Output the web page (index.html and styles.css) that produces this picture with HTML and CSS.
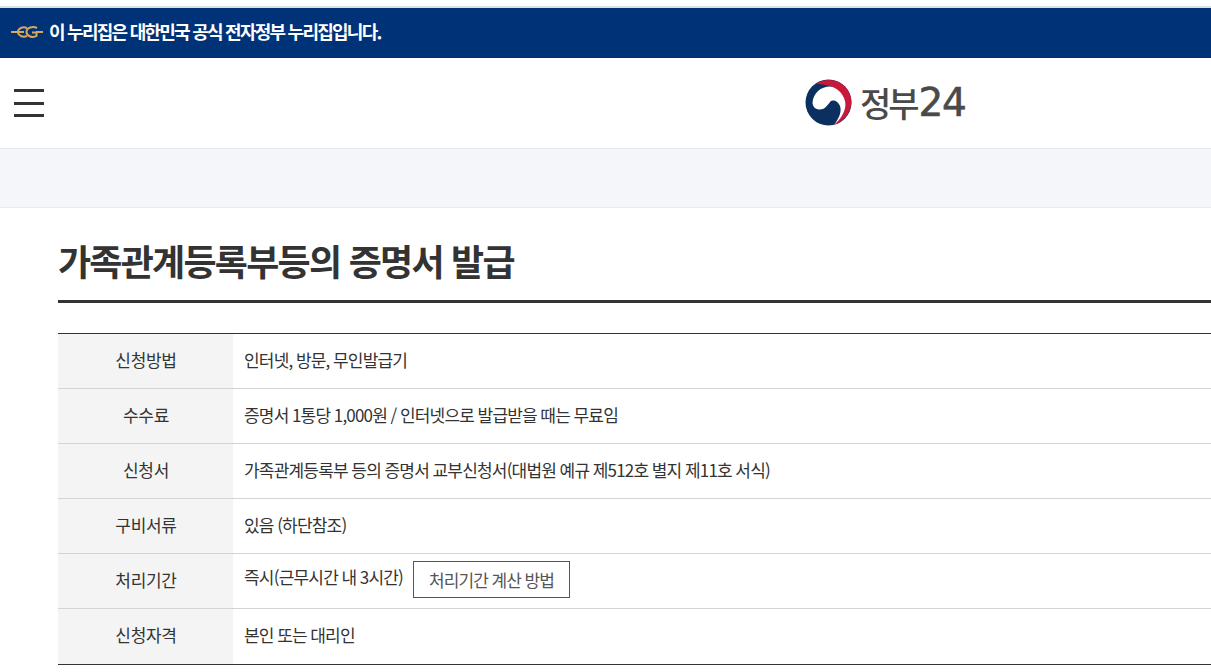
FILE: index.html
```html
<!DOCTYPE html>
<html lang="ko">
<head>
<meta charset="utf-8">
<title>가족관계등록부등의 증명서 발급</title>
<link rel="stylesheet" href="styles.css">
</head>
<body>
<div class="topline"></div>
<div class="gov-banner">
  <svg class="eg" width="32" height="12" viewBox="0 0 32 12" fill="none" stroke="#d6a85c" stroke-width="2">
    <path d="M0 6H13"/>
    <path d="M16 2C12 .5 8 1.500 6.500 6C8 10.500 12 11.500 16 10"/>
    <path d="M26 2C22 0 15.500 1.500 15.500 6C15.500 10.500 22 12 25.500 10V6.500H21"/>
    <path d="M25 6H32"/>
  </svg>
  <span class="gov-text">이 누리집은 대한민국 공식 전자정부 누리집입니다.</span>
</div>
<header class="site-header">
  <button class="menu" aria-label="메뉴"><span></span><span></span><span></span></button>
  <div class="logo">
    <svg width="47" height="47" viewBox="0 0 47 47">
      <circle cx="23.500" cy="23.500" r="23" fill="#0b2f5e"/>
      <path d="M7.500 24C8 14 16 7.500 25 7.500C35 7.500 42 15 42 24C42 33 37 41 29 46C34 39 37 33 35 27C33 22 28 20 25 23C22 27 19 31 14 30.500C10 30 8 27.500 7.500 24Z" fill="#fff"/>
      <path d="M11 4.500C19 -.5 31 -.5 39 6.500C48 15 49 28 41 37.500C38 41 34 44.500 29 46C36 40 42 31 40 22C38 13 29 6.500 20 6C17 5.500 14 5 11 4.500Z" fill="#c8183c"/>
    </svg>
    <span class="logo-text">정부<span class="logo-num">24</span></span>
  </div>
</header>
<div class="band"></div>
<main class="content">
  <h1 class="title">가족관계등록부등의 증명서 발급</h1>
  <div class="info">
    <div class="row"><div class="th">신청방법</div><div class="td">인터넷, 방문, 무인발급기</div></div>
    <div class="row"><div class="th">수수료</div><div class="td">증명서 1통당 1,000원 / 인터넷으로 발급받을 때는 무료임</div></div>
    <div class="row"><div class="th">신청서</div><div class="td">가족관계등록부 등의 증명서 교부신청서(대법원 예규 제512호 별지 제11호 서식)</div></div>
    <div class="row"><div class="th">구비서류</div><div class="td">있음 (하단참조)</div></div>
    <div class="row"><div class="th">처리기간</div><div class="td td-btn"><span class="raised">즉시(근무시간 내 3시간)</span><a class="btn">처리기간 계산 방법</a></div></div>
    <div class="row"><div class="th">신청자격</div><div class="td">본인 또는 대리인</div></div>
  </div>
</main>
</body>
</html>
```
FILE: styles.css
```css
* { box-sizing: border-box; }
html, body { margin: 0; padding: 0; height: 672px; overflow: hidden; background: #fff; }
body { font-family: "Noto Sans CJK KR", "Noto Sans", sans-serif; color: #333; }
.topline { height: 8px; border-bottom: 2px solid #dcdfe6; background: #fff; }
.gov-banner { height: 50px; background: #003278; display: flex; align-items: center; padding-left: 11px; gap: 6px; }
.eg { margin-bottom: 2px; }
.gov-text { color: #fff; font-size: 18px; font-weight: 700; letter-spacing: -1.75px; margin-bottom: 4px; }
.site-header { height: 91px; border-bottom: 1px solid #e6e8ee; display: flex; align-items: center; position: relative; padding-left: 14px; }
.menu { width: 30px; height: 28px; padding: 0; border: 0; background: none; display: flex; flex-direction: column; justify-content: space-between; }
.menu span { display: block; height: 3px; background: #333; }
.logo { position: absolute; left: 805px; top: 21px; display: flex; align-items: center; gap: 8px; }
.logo svg { width: 47px; height: 47px; }
.logo-text { font-size: 34px; font-weight: 500; color: #4a4a4a; letter-spacing: -3px; line-height: 47px; display: flex; align-items: center; white-space: nowrap; }
.logo-num { font-family: "DejaVu Sans", sans-serif; font-size: 39px; font-weight: 400; letter-spacing: -1.5px; margin-left: 2px; -webkit-text-stroke: 0.6px #4a4a4a; }
.band { height: 59px; background: #f5f6fa; border-bottom: 1px solid #e8eaf0; }
.content { padding-left: 58px; width: 1300px; }
.title { margin: 0; height: 95px; border-bottom: 3px solid #333; font-size: 36px; line-height: 104px; font-weight: 700; letter-spacing: -1.75px; color: #333; }
.info { margin-top: 30px; border-top: 1px solid #333; border-bottom: 1px solid #333; }
.row { display: flex; height: 55px; border-bottom: 1px solid #d4d4d4; }
.row:last-child { border-bottom: 0; }
.th { width: 175px; background: #f4f4f4; display: flex; align-items: center; justify-content: center; font-size: 17px; letter-spacing: -0.3px; padding-bottom: 4px; padding-left: 1px; }
.td { flex: 1; padding-left: 11px; display: flex; align-items: center; font-size: 17px; letter-spacing: -0.8px; word-spacing: -0.5px; padding-bottom: 4px; }
.td-btn { gap: 10px; }
.raised { margin-bottom: 6px; }
.btn { height: 37px; width: 157px; border: 1px solid #555; display: flex; align-items: center; justify-content: center; color: #555; font-size: 17px; letter-spacing: -0.85px; margin-bottom: -1px; }
```
